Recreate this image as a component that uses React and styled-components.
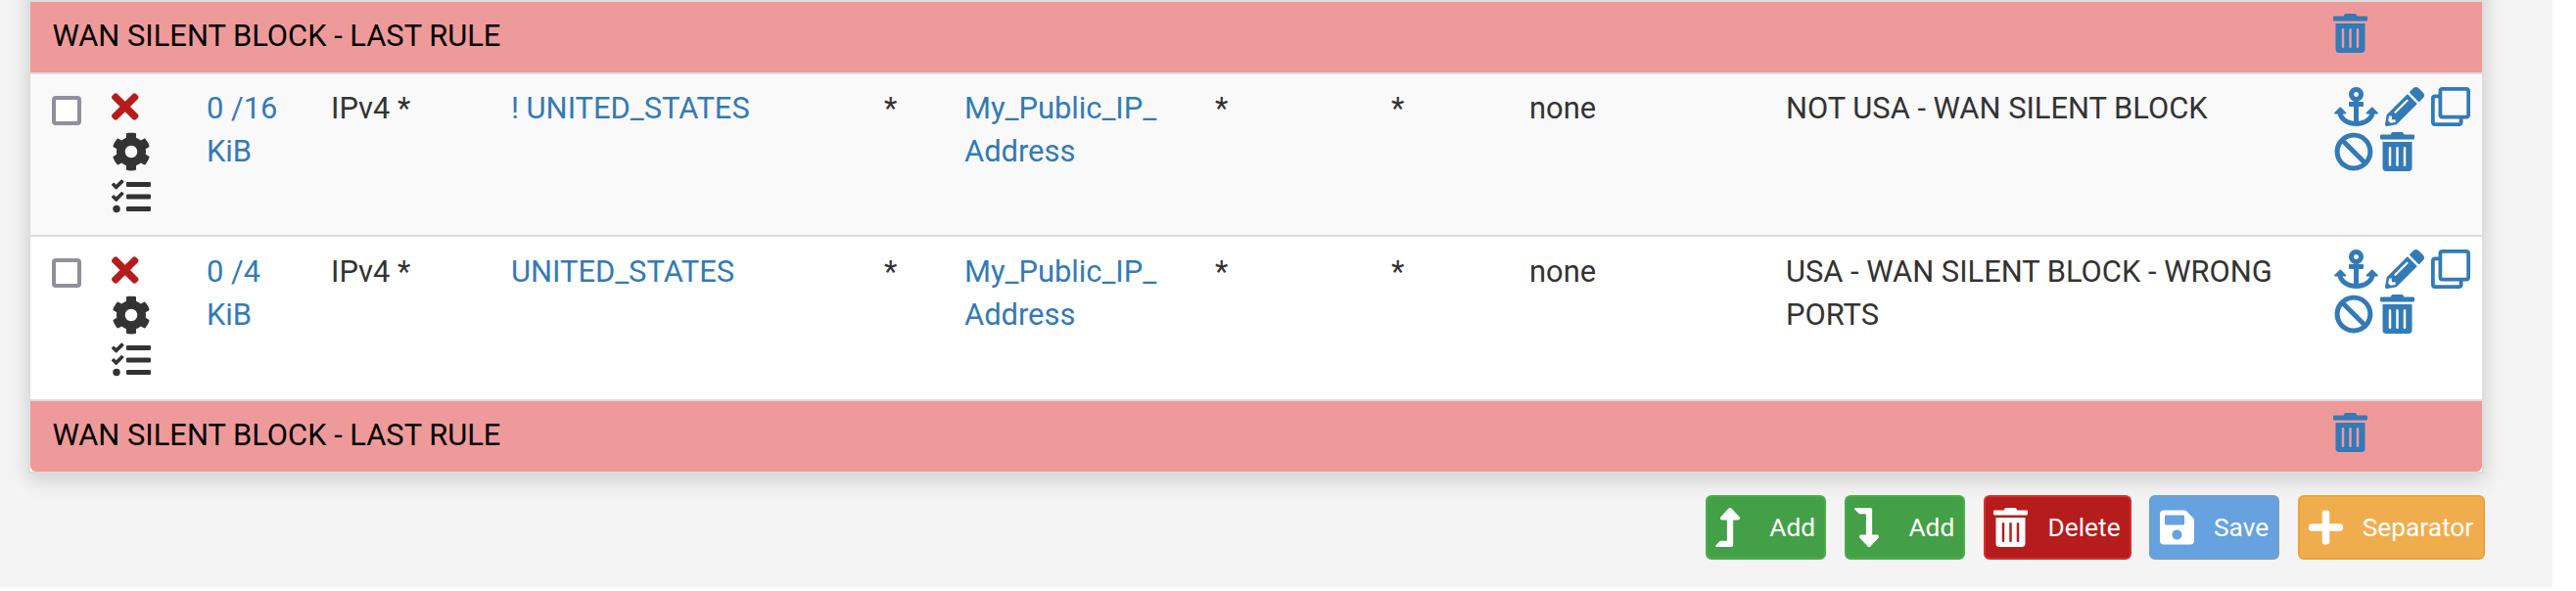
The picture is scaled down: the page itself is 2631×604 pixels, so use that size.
import React from "react";
import styled, { createGlobalStyle } from "styled-components";
import {
  FaAnchor,
  FaBan,
  FaCog,
  FaLevelDownAlt,
  FaLevelUpAlt,
  FaPencilAlt,
  FaPlus,
  FaRegClone,
  FaSave,
  FaTasks,
  FaTimes,
  FaTrashAlt,
} from "react-icons/fa";

const GlobalStyle = createGlobalStyle`
  * { box-sizing: border-box; }
  body {
    margin: 0;
    background: #fff;
    font-family: Roboto, "Liberation Sans", sans-serif;
    font-size: 30.87px;
    line-height: 43.7px;
    color: #333;
  }
`;

const glyph = (Icon, width) => styled(Icon)`
  display: block;
  flex: none;
  width: ${width}px;
  height: 40px;
`;

const Anchor = glyph(FaAnchor, 45);
const Pencil = glyph(FaPencilAlt, 40);
const Clone = glyph(FaRegClone, 40);
const Ban = glyph(FaBan, 40);
const Trash = glyph(FaTrashAlt, 35);
const Cog = glyph(FaCog, 40);
const Tasks = glyph(FaTasks, 40);
const Times = glyph(FaTimes, 27.5);
const LevelUp = glyph(FaLevelUpAlt, 25);
const LevelDown = glyph(FaLevelDownAlt, 25);
const Save = glyph(FaSave, 35);
const Plus = glyph(FaPlus, 35);

const Page = styled.main`
  width: 2607px;
  height: 600px;
  padding: 0 69px 0 29px;
  background: #f4f4f4;
  overflow: hidden;
`;

/* The panel continues above the visible area so its shadow runs to the top edge. */
const Panel = styled.section`
  width: 2508px;
  margin-top: -40px;
  padding-top: 40px;
  border: 2px solid #ddd;
  border-top: 0;
  background: #fff;
  box-shadow: 0 6px 20px rgba(0, 0, 0, 0.16);
`;

const SeparatorRow = styled.div`
  display: flex;
  justify-content: space-between;
  height: 74px;
  padding: 12px 116.6px 0 22.5px;
  border-top: 2px solid #ddd;
  border-radius: ${(p) => (p.$last ? "0 0 6px 6px" : "0")};
  background: #ef9a9a;
  background-clip: padding-box;
  color: #000;
`;

const SeparatorText = styled.span`
  padding-top: 1px;
`;

const RuleRow = styled.div`
  display: grid;
  grid-template-columns: 61px 97px 127px 184px 381px 82px 256px 180px 141px 262px 560px 1fr;
  height: ${(p) => p.$height}px;
  padding-left: 22px;
  border-top: 2px solid #ddd;
  background: ${(p) => (p.$striped ? "#f9f9f9" : "#fff")};
`;

const Cell = styled.div`
  padding-top: ${(p) => p.$top}px;
  white-space: pre-line;
`;

const RuleLink = styled.a`
  color: #337ab7;
`;

const Checkbox = styled.input`
  appearance: none;
  display: block;
  width: 30px;
  height: 30px;
  margin: 22px 0 0;
  border: 4px solid #8f8f9d;
  border-radius: 4px;
  background: #fff;
`;

const StatusIcons = styled.div`
  display: flex;
  flex-direction: column;
  align-items: flex-start;
  gap: 6px;
  padding-top: ${(p) => p.$top}px;
  padding-left: 0.4px;
`;

const BlockIcon = styled(Times)`
  color: #b71c1c;
`;

const Actions = styled.div`
  display: flex;
  flex-wrap: wrap;
  align-content: flex-start;
  gap: 6px 7.2px;
  padding-top: 13px;
  color: #337ab7;
`;

const DeleteIcon = styled(Trash)`
  color: #337ab7;
`;

const Toolbar = styled.nav`
  display: flex;
  justify-content: flex-end;
  gap: 18.7px;
  width: 2509px;
  padding-top: 22px;
`;

const Button = styled.button`
  display: flex;
  align-items: center;
  width: ${(p) => p.$width}px;
  height: 66px;
  padding: 0 0 0 8.5px;
  border: 2px solid ${(p) => p.$border};
  border-radius: 6px;
  background: ${(p) => p.$color};
  color: #fff;
  font: 26.3px/38px Roboto, "Liberation Sans", sans-serif;
`;

const ButtonIcon = styled.span`
  width: 55.2px;
`;

function ActionIcons() {
  return (
    <Actions>
      <Anchor />
      <Pencil />
      <Clone />
      <Ban />
      <Trash />
    </Actions>
  );
}

function Rule({ rule }) {
  const { iconTop, textTop } = rule;
  return (
    <RuleRow $striped={rule.striped} $height={rule.height}>
      <Checkbox type="checkbox" />
      <StatusIcons $top={iconTop}>
        <BlockIcon />
        <Cog />
        <Tasks />
      </StatusIcons>
      <Cell $top={textTop}><RuleLink>{rule.states}</RuleLink></Cell>
      <Cell $top={textTop}>IPv4 *</Cell>
      <Cell $top={textTop}><RuleLink>{rule.source}</RuleLink></Cell>
      <Cell $top={textTop}>*</Cell>
      <Cell $top={textTop}><RuleLink>{"My_Public_IP_\nAddress"}</RuleLink></Cell>
      <Cell $top={textTop}>*</Cell>
      <Cell $top={textTop}>*</Cell>
      <Cell $top={textTop}>none</Cell>
      <Cell $top={textTop}>{rule.description}</Cell>
      <ActionIcons />
    </RuleRow>
  );
}

function Separator({ last }) {
  return (
    <SeparatorRow $last={last}>
      <SeparatorText>WAN SILENT BLOCK - LAST RULE</SeparatorText>
      <DeleteIcon />
    </SeparatorRow>
  );
}

const rules = [
  {
    states: "0 /16\nKiB",
    source: "! UNITED_STATES",
    description: "NOT USA - WAN SILENT BLOCK",
    striped: true,
    height: 166,
    iconTop: 12.6,
    textTop: 13,
  },
  {
    states: "0 /4\nKiB",
    source: "UNITED_STATES",
    description: "USA - WAN SILENT BLOCK - WRONG\nPORTS",
    striped: false,
    height: 168,
    iconTop: 13.5,
    textTop: 13.8,
  },
];

const buttons = [
  { label: "Add", Icon: LevelUp, color: "#43a047", border: "#4cae4c", width: 123.4 },
  { label: "Add", Icon: LevelDown, color: "#43a047", border: "#4cae4c", width: 123.4 },
  { label: "Delete", Icon: Trash, color: "#b71c1c", border: "#d62f2f", width: 150.8 },
  { label: "Save", Icon: Save, color: "#66a2df", border: "#739ec6", width: 133 },
  { label: "Separator", Icon: Plus, color: "#f0ad4e", border: "#eea236", width: 191 },
];

export default function App() {
  return (
    <Page>
      <GlobalStyle />
      <Panel>
        <Separator />
        {rules.map((rule) => (
          <Rule key={rule.description} rule={rule} />
        ))}
        <Separator last />
      </Panel>
      <Toolbar>
        {buttons.map(({ label, Icon, color, border, width }, i) => (
          <Button key={i} type="button" $color={color} $border={border} $width={width}>
            <ButtonIcon><Icon /></ButtonIcon>
            {label}
          </Button>
        ))}
      </Toolbar>
    </Page>
  );
}
